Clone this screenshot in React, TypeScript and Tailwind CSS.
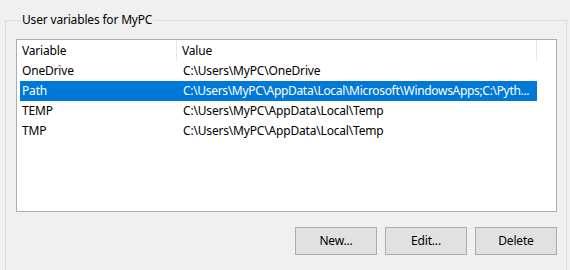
import React from "react";

const rows = [
  { name: "OneDrive", value: "C:\\Users\\MyPC\\OneDrive" },
  { name: "Path", value: "C:\\Users\\MyPC\\AppData\\Local\\Microsoft\\WindowsApps;C:\\Pyth...", selected: true },
  { name: "TEMP", value: "C:\\Users\\MyPC\\AppData\\Local\\Temp" },
  { name: "TMP", value: "C:\\Users\\MyPC\\AppData\\Local\\Temp" },
];

export default function App() {
  return (
    <div
      className="w-[570px] h-[270px] bg-[#f0f0f0] overflow-hidden text-[12px] tracking-[-0.18px] text-black"
      style={{ fontFamily: '"Noto Sans", "Open Sans", sans-serif' }}
    >
      <fieldset className="ml-[5px] mt-[12px] w-[562px] h-[270px] border border-[#dcdcdc] pl-[10px]">
        <legend className="ml-[5px] px-[1px] leading-[16px]">User variables for MyPC</legend>
        <div className="mt-[11px] w-[541px] h-[173px] border border-[#abadb3] bg-white">
          <div className="flex h-[21px] leading-[22px]">
            <div className="w-[160px] pl-[5px] border-r border-[#e5e5e5]">Variable</div>
            <div className="w-[360px] pl-[5px] border-r border-[#e5e5e5]">Value</div>
          </div>
          <div className="flex flex-col">
            {rows.map((r) => (
              <div
                key={r.name}
                className={
                  "ml-[3px] w-[517px] h-[20px] leading-[20px] flex whitespace-nowrap " +
                  (r.selected ? "bg-[#0078d7] text-white" : "")
                }
              >
                <div className="w-[163px] pl-[2px]">{r.name}</div>
                <div className={"w-[354px] " + (r.selected ? "tracking-[-0.32px]" : "")}>{r.value}</div>
              </div>
            ))}
          </div>
        </div>
        <div className="mt-[15px] w-[541px] flex justify-end gap-[8px]">
          {["New...", "Edit...", "Delete"].map((b) => (
            <button
              key={b}
              className="w-[82px] h-[28px] bg-[#e1e1e1] border border-[#adadad] text-[12px]"
            >
              {b}
            </button>
          ))}
        </div>
      </fieldset>
    </div>
  );
}
